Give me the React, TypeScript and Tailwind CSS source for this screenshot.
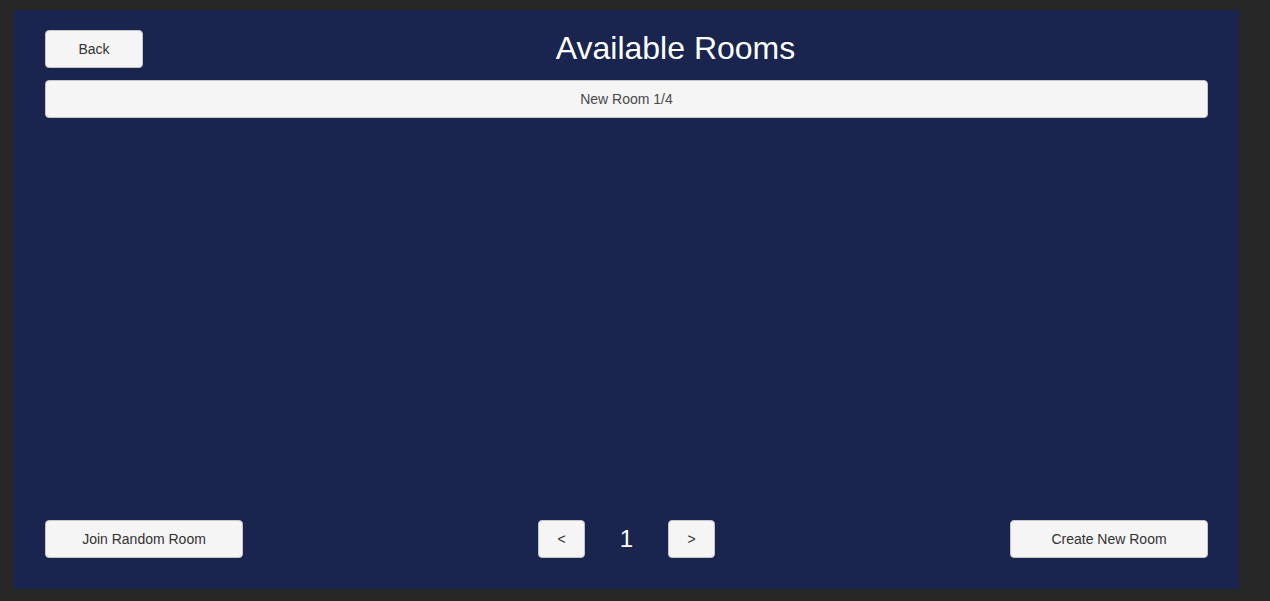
import React from "react";

const btn =
  "flex items-center justify-center bg-[#f5f5f5] border border-[#c4c4c4] rounded-[4px] text-[14px] text-[#323232] box-border";

export default function App() {
  return (
    <div
      className="w-[1270px] h-[601px] bg-[#272727] pl-[14px] pt-[10px] box-border"
      style={{ fontFamily: '"Liberation Sans", Arial, sans-serif' }}
    >
      <div className="w-[1225px] h-[579px] bg-[#19254f] flex flex-col pt-[20px] px-[31px] pb-[31px] box-border">
        <div className="flex items-center h-[38px]">
          <div className={`${btn} w-[98px] h-[38px]`}>Back</div>
          <div className="flex-1 flex justify-center text-white text-[32px] leading-none mt-[-3px]">
            Available Rooms
          </div>
        </div>
        <div className={`${btn} mt-[12px] h-[38px] text-[#494949]`}>New Room 1/4</div>
        <div className="flex-1" />
        <div className="flex items-center justify-between h-[38px]">
          <div className={`${btn} w-[198px] h-[38px]`}>Join Random Room</div>
          <div className="flex items-center w-[177px] justify-between">
            <div className={`${btn} w-[47px] h-[38px]`}>&lt;</div>
            <div className="text-white text-[24px] leading-none">1</div>
            <div className={`${btn} w-[47px] h-[38px]`}>&gt;</div>
          </div>
          <div className={`${btn} w-[198px] h-[38px]`}>Create New Room</div>
        </div>
      </div>
    </div>
  );
}
